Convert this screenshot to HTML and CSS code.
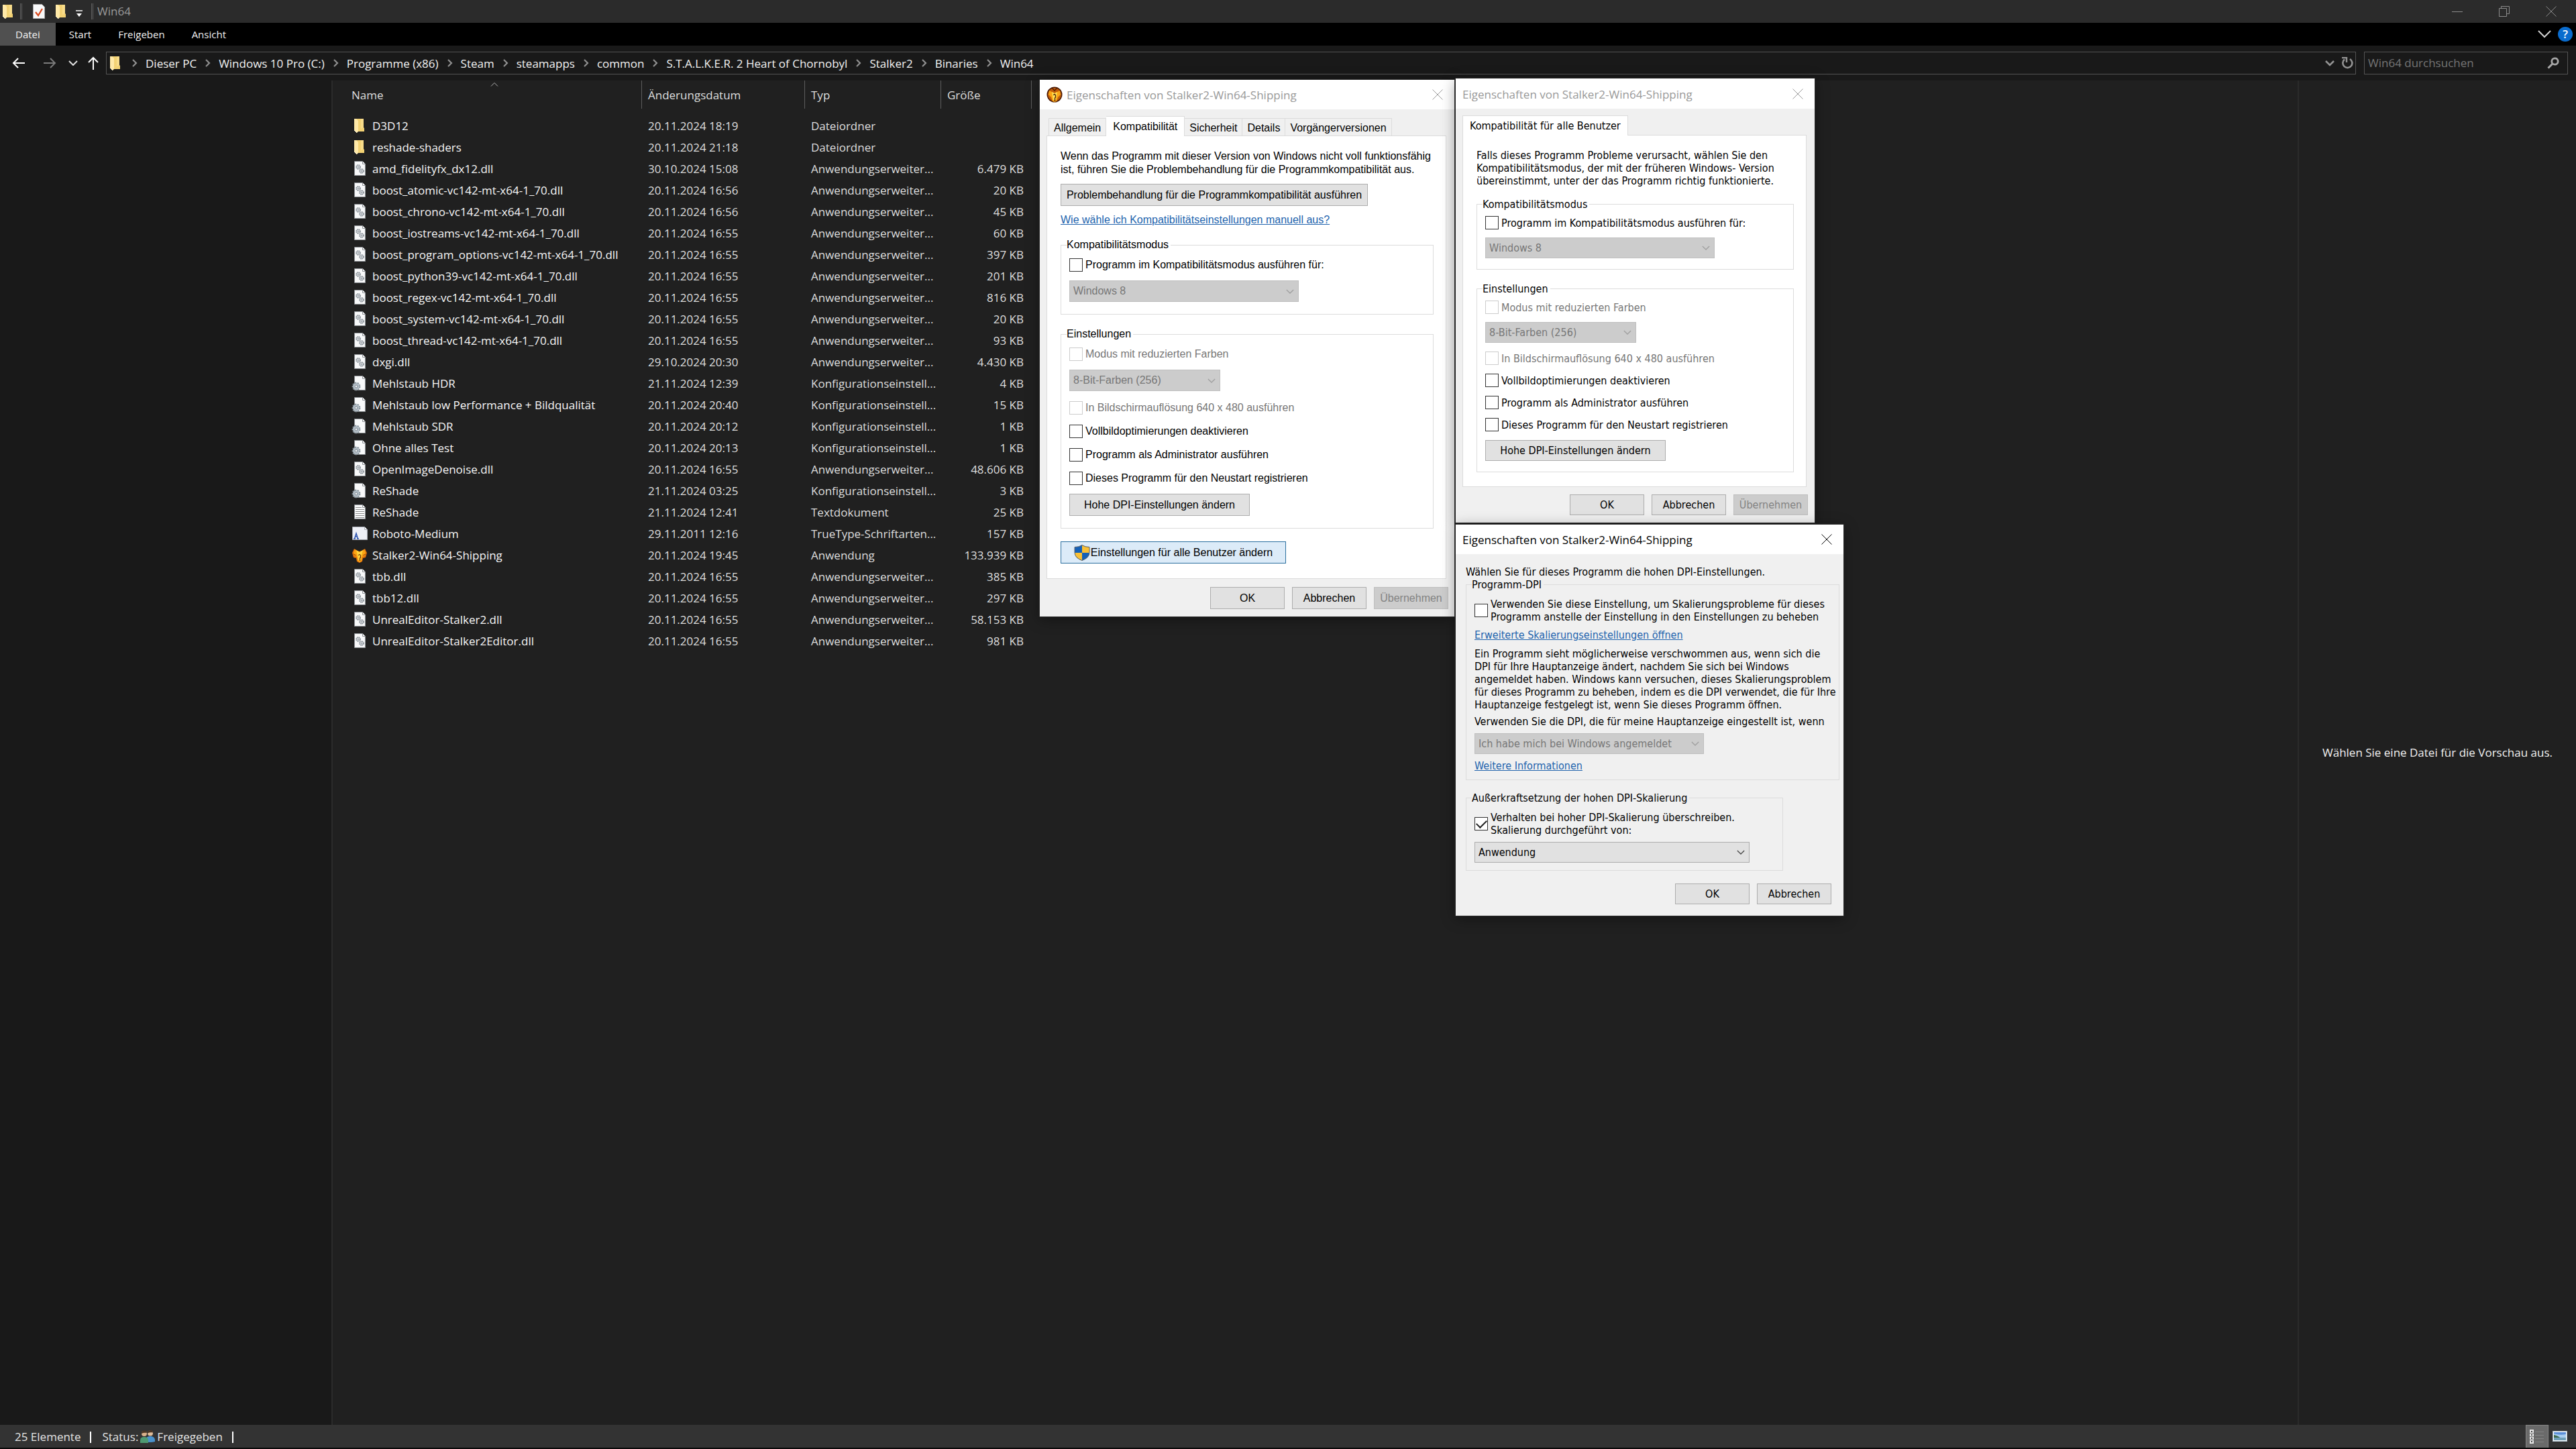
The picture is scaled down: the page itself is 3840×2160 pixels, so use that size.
FILE: index.html
```html
<!DOCTYPE html>
<html lang="de">
<head>
<meta charset="utf-8">
<title>Win64</title>
<link rel="stylesheet" href="styles.css">
</head>
<body>
<svg class="sprite" aria-hidden="true">
  <symbol id="folder" viewBox="0 0 24 24"><path d="M6 2h12v13l1 1v5H6z" fill="#f3d274"/><path d="M14 2h4v13l-4 2z" fill="#f8dc8a"/><path d="M4 2h3l3 3v16l-2 2-1-1-3-3z" fill="#ffe9a8"/><path d="M4 19l3 3 1 1" stroke="#fff6d8" fill="none"/></symbol>
  <symbol id="dll" viewBox="0 0 24 24"><path d="M4.500 1.500h12l4 4v17h-16z" fill="#f8f9fa" stroke="#8b8f93"/><path d="M16.500 1.500v4h4" fill="#fff" stroke="#8b8f93"/><circle cx="10" cy="10" r="3" fill="#dfe3e7" stroke="#7f878e" stroke-width="1.600" stroke-dasharray="1.600 .8"/><circle cx="10" cy="10" r="1" fill="#fff" stroke="#7f878e" stroke-width=".8"/><circle cx="15" cy="16" r="3" fill="#dfe3e7" stroke="#7f878e" stroke-width="1.600" stroke-dasharray="1.600 .8"/><circle cx="15" cy="16" r="1" fill="#fff" stroke="#7f878e" stroke-width=".8"/></symbol>
  <symbol id="ini" viewBox="0 0 24 24"><path d="M4.500 1.500h12l4 4v17h-16z" fill="#f8f9fa" stroke="#8b8f93"/><path d="M16.500 1.500v4h4" fill="#fff" stroke="#8b8f93"/><circle cx="7" cy="17" r="5" fill="#b9c3cc" stroke="#87939b" stroke-width="2.800" stroke-dasharray="2.200 1.300"/><circle cx="7" cy="17" r="4.600" fill="#b4bfc8"/><circle cx="7" cy="17" r="2" fill="#f4f6f8" stroke="#7c878f"/></symbol>
  <symbol id="txt" viewBox="0 0 24 24"><path d="M4.500 1.500h12l4 4v17h-16z" fill="#f8f9fa" stroke="#8b8f93"/><path d="M16.500 1.500v4h4" fill="#fff" stroke="#8b8f93"/><path d="M6 5.500h9M6 8.500h13M6 11.500h13M6 14.500h13M6 17.500h13M6 20.500h13" stroke="#8e8e8e"/></symbol>
  <symbol id="ttf" viewBox="0 0 24 24"><path d="M1.500 2.500h18l4 4v15h-22z" fill="#eef0f6" stroke="#a9adb5"/><path d="M19.500 2.500v4h4" fill="#fff" stroke="#a9adb5"/><path d="M3 20h3M8 20h3M4.500 20l2.500-8 2.500 8M5.600 17h3" stroke="#2f55b0" stroke-width="1.500" fill="none"/></symbol>
  <symbol id="game" viewBox="0 0 24 24"><path d="M1 9l3-6 5 3 3 1 3-1 5-3 3 6-2 7-4 1-1 5-4 2-4-2-1-5-4-1z" fill="#e0720c"/><path d="M3 9l2-5 7 5 7-5 2 5-2 5-3 1-1 6-3 2-3-2-1-6-3-1z" fill="#fba514"/><path d="M12 8l5-3-2 8-1 7h-4l-1-7-2-8z" fill="#ffd53e"/><path d="M10.500 13q1.500-3 3 0v3l-1 1v4" stroke="#6b2d06" stroke-width="1.200" fill="none"/><path d="M3 11l4 2M21 11l-4 2" stroke="#9a4208" fill="none"/></symbol>
  <symbol id="gameround" viewBox="0 0 24 24"><circle cx="12" cy="12" r="11.500" fill="#4a1a05"/><circle cx="12" cy="12" r="10" fill="#c05a0a"/><path d="M4 6l8 4 8-4 1 6-4 4-2 6-3 1-3-1-2-6-4-4z" fill="#fba514"/><path d="M8 8l4 2 4-2-2 12h-4z" fill="#ffe055"/><path d="M10.500 13q1.500-3 3 0v3l-1 1v5M8 2l4 4 4-4" stroke="#4a1b05" stroke-width="1.300" fill="none"/></symbol>
  <symbol id="crumb" viewBox="0 0 10 12"><path d="M2 1l5 5-5 5" fill="none" stroke="#8f8f8f" stroke-width="2.200"/></symbol>
  <symbol id="down" viewBox="0 0 14 8"><path d="M1 1l6 6 6-6" fill="none" stroke="currentColor" stroke-width="1.500"/></symbol>
  <symbol id="close" viewBox="0 0 16 16"><path d="M.5.500l15 15M15.500.500l-15 15" fill="none" stroke="currentColor"/></symbol>
</svg>

<header class="titlebar">
  <svg class="ico"><use href="#folder"/></svg>
  <span class="vbar"></span>
  <svg class="ico qa-props" viewBox="0 0 24 24"><path d="M3.500 1.500h13l4 4v17h-17z" fill="#f8f9fa" stroke="#a9a9a9"/><path d="M7 13l4 5 6-10" fill="none" stroke="#d9481c" stroke-width="2.200"/></svg>
  <svg class="ico qa-folder"><use href="#folder"/></svg>
  <svg class="ico qa-more" viewBox="0 0 24 24"><path d="M7 11h10" stroke="#fff" stroke-width="1.500"/><path d="M8 15h8l-4 5z" fill="#fff"/></svg>
  <span class="vbar"></span>
  <h1 class="window-name">Win64</h1>
  <div class="window-buttons">
    <button aria-label="Minimieren"><svg width="16" height="16"><path d="M0 8.500h16" stroke="#8c8c8c"/></svg></button>
    <button aria-label="Verkleinern"><svg width="16" height="16"><path d="M.5 3.500h11v12H.5zM3.500 3V.500h12v11H12" fill="none" stroke="#8c8c8c"/></svg></button>
    <button aria-label="Fenster schließen"><svg width="16" height="16"><use href="#close"/></svg></button>
  </div>
</header>

<nav class="ribbon">
  <button class="ribbon-tab file">Datei</button>
  <button class="ribbon-tab">Start</button>
  <button class="ribbon-tab">Freigeben</button>
  <button class="ribbon-tab">Ansicht</button>
  <div class="ribbon-end">
    <button aria-label="Menüband erweitern"><svg width="20" height="12" viewBox="0 0 20 12"><path d="M1 1l9 9 9-9" fill="none" stroke="#d0d0d0" stroke-width="2"/></svg></button>
    <button class="help" aria-label="Hilfe">?</button>
  </div>
</nav>

<div class="navbar">
  <button class="nav-btn wide" aria-label="Zurück"><svg width="20" height="16" viewBox="0 0 20 16"><path d="M19 8H2M9 1L2 8l7 7" fill="none" stroke="#fff" stroke-width="2"/></svg></button>
  <button class="nav-btn wide" aria-label="Vorwärts"><svg width="20" height="16" viewBox="0 0 20 16"><path d="M1 8h17M11 1l7 7-7 7" fill="none" stroke="#7b7b7b" stroke-width="2"/></svg></button>
  <button class="nav-btn recent" aria-label="Zuletzt besucht"><svg width="14" height="8" viewBox="0 0 14 8"><path d="M1 1l6 6 6-6" fill="none" stroke="#e0e0e0" stroke-width="2"/></svg></button>
  <button class="nav-btn up" aria-label="Nach oben"><svg width="16" height="20" viewBox="0 0 16 20"><path d="M8 20V2M1 9l7-7 7 7" fill="none" stroke="#fff" stroke-width="2"/></svg></button>
  <div class="address">
    <svg class="ico"><use href="#folder"/></svg>
    <svg class="sep"><use href="#crumb"/></svg><a href="#">Dieser PC</a>
    <svg class="sep"><use href="#crumb"/></svg><a href="#">Windows 10 Pro (C:)</a>
    <svg class="sep"><use href="#crumb"/></svg><a href="#">Programme (x86)</a>
    <svg class="sep"><use href="#crumb"/></svg><a href="#">Steam</a>
    <svg class="sep"><use href="#crumb"/></svg><a href="#">steamapps</a>
    <svg class="sep"><use href="#crumb"/></svg><a href="#">common</a>
    <svg class="sep"><use href="#crumb"/></svg><a href="#">S.T.A.L.K.E.R. 2 Heart of Chornobyl</a>
    <svg class="sep"><use href="#crumb"/></svg><a href="#">Stalker2</a>
    <svg class="sep"><use href="#crumb"/></svg><a href="#">Binaries</a>
    <svg class="sep"><use href="#crumb"/></svg><a href="#">Win64</a>
    <div class="address-end">
      <button aria-label="Frühere Orte"><svg width="14" height="9" viewBox="0 0 14 9"><path d="M1 1l6 6 6-6" fill="none" stroke="#949494" stroke-width="2.600"/></svg></button>
      <button aria-label="Aktualisieren"><svg width="18" height="18" viewBox="0 0 18 18"><path d="M5 3.500a7 7 0 1 0 8-.5" fill="none" stroke="#949494" stroke-width="2.600"/><path d="M1 1h7v7" fill="none" stroke="#949494" stroke-width="2.400"/></svg></button>
    </div>
  </div>
  <form class="search">
    <input type="text" aria-label="Win64 durchsuchen" placeholder="Win64 durchsuchen">
    <button type="button" aria-label="Suchen"><svg width="18" height="18" viewBox="0 0 18 18"><circle cx="11.500" cy="6.500" r="4.700" fill="none" stroke="#a8a8a8" stroke-width="2.800"/><path d="M8 10l-6.500 6.500" stroke="#a8a8a8" stroke-width="3"/></svg></button>
  </form>
</div>

<main class="panes">
  <aside class="tree"></aside>
  <section class="files">
    <table>
      <colgroup><col class="c-name"><col class="c-date"><col class="c-type"><col class="c-size"></colgroup>
      <thead><tr><th><svg class="sort" viewBox="0 0 12 6"><path d="M1 5.500l5-5 5 5" fill="none" stroke="#b0b0b0"/></svg>Name</th><th>Änderungsdatum</th><th>Typ</th><th>Größe</th></tr></thead>
      <tbody>
        <tr><td><svg class="ico"><use href="#folder"/></svg>D3D12</td><td>20.11.2024 18:19</td><td>Dateiordner</td><td></td></tr>
        <tr><td><svg class="ico"><use href="#folder"/></svg>reshade-shaders</td><td>20.11.2024 21:18</td><td>Dateiordner</td><td></td></tr>
        <tr><td><svg class="ico"><use href="#dll"/></svg>amd_fidelityfx_dx12.dll</td><td>30.10.2024 15:08</td><td>Anwendungserweiter...</td><td>6.479 KB</td></tr>
        <tr><td><svg class="ico"><use href="#dll"/></svg>boost_atomic-vc142-mt-x64-1_70.dll</td><td>20.11.2024 16:56</td><td>Anwendungserweiter...</td><td>20 KB</td></tr>
        <tr><td><svg class="ico"><use href="#dll"/></svg>boost_chrono-vc142-mt-x64-1_70.dll</td><td>20.11.2024 16:56</td><td>Anwendungserweiter...</td><td>45 KB</td></tr>
        <tr><td><svg class="ico"><use href="#dll"/></svg>boost_iostreams-vc142-mt-x64-1_70.dll</td><td>20.11.2024 16:55</td><td>Anwendungserweiter...</td><td>60 KB</td></tr>
        <tr><td><svg class="ico"><use href="#dll"/></svg>boost_program_options-vc142-mt-x64-1_70.dll</td><td>20.11.2024 16:55</td><td>Anwendungserweiter...</td><td>397 KB</td></tr>
        <tr><td><svg class="ico"><use href="#dll"/></svg>boost_python39-vc142-mt-x64-1_70.dll</td><td>20.11.2024 16:55</td><td>Anwendungserweiter...</td><td>201 KB</td></tr>
        <tr><td><svg class="ico"><use href="#dll"/></svg>boost_regex-vc142-mt-x64-1_70.dll</td><td>20.11.2024 16:55</td><td>Anwendungserweiter...</td><td>816 KB</td></tr>
        <tr><td><svg class="ico"><use href="#dll"/></svg>boost_system-vc142-mt-x64-1_70.dll</td><td>20.11.2024 16:55</td><td>Anwendungserweiter...</td><td>20 KB</td></tr>
        <tr><td><svg class="ico"><use href="#dll"/></svg>boost_thread-vc142-mt-x64-1_70.dll</td><td>20.11.2024 16:55</td><td>Anwendungserweiter...</td><td>93 KB</td></tr>
        <tr><td><svg class="ico"><use href="#dll"/></svg>dxgi.dll</td><td>29.10.2024 20:30</td><td>Anwendungserweiter...</td><td>4.430 KB</td></tr>
        <tr><td><svg class="ico"><use href="#ini"/></svg>Mehlstaub HDR</td><td>21.11.2024 12:39</td><td>Konfigurationseinstell...</td><td>4 KB</td></tr>
        <tr><td><svg class="ico"><use href="#ini"/></svg>Mehlstaub low Performance + Bildqualität</td><td>20.11.2024 20:40</td><td>Konfigurationseinstell...</td><td>15 KB</td></tr>
        <tr><td><svg class="ico"><use href="#ini"/></svg>Mehlstaub SDR</td><td>20.11.2024 20:12</td><td>Konfigurationseinstell...</td><td>1 KB</td></tr>
        <tr><td><svg class="ico"><use href="#ini"/></svg>Ohne alles Test</td><td>20.11.2024 20:13</td><td>Konfigurationseinstell...</td><td>1 KB</td></tr>
        <tr><td><svg class="ico"><use href="#dll"/></svg>OpenImageDenoise.dll</td><td>20.11.2024 16:55</td><td>Anwendungserweiter...</td><td>48.606 KB</td></tr>
        <tr><td><svg class="ico"><use href="#ini"/></svg>ReShade</td><td>21.11.2024 03:25</td><td>Konfigurationseinstell...</td><td>3 KB</td></tr>
        <tr><td><svg class="ico"><use href="#txt"/></svg>ReShade</td><td>21.11.2024 12:41</td><td>Textdokument</td><td>25 KB</td></tr>
        <tr><td><svg class="ico"><use href="#ttf"/></svg>Roboto-Medium</td><td>29.11.2011 12:16</td><td>TrueType-Schriftarten...</td><td>157 KB</td></tr>
        <tr><td><svg class="ico"><use href="#game"/></svg>Stalker2-Win64-Shipping</td><td>20.11.2024 19:45</td><td>Anwendung</td><td>133.939 KB</td></tr>
        <tr><td><svg class="ico"><use href="#dll"/></svg>tbb.dll</td><td>20.11.2024 16:55</td><td>Anwendungserweiter...</td><td>385 KB</td></tr>
        <tr><td><svg class="ico"><use href="#dll"/></svg>tbb12.dll</td><td>20.11.2024 16:55</td><td>Anwendungserweiter...</td><td>297 KB</td></tr>
        <tr><td><svg class="ico"><use href="#dll"/></svg>UnrealEditor-Stalker2.dll</td><td>20.11.2024 16:55</td><td>Anwendungserweiter...</td><td>58.153 KB</td></tr>
        <tr><td><svg class="ico"><use href="#dll"/></svg>UnrealEditor-Stalker2Editor.dll</td><td>20.11.2024 16:55</td><td>Anwendungserweiter...</td><td>981 KB</td></tr>
      </tbody>
    </table>
  </section>
  <aside class="preview">Wählen Sie eine Datei für die Vorschau aus.</aside>
</main>

<footer class="status">
  <span>25 Elemente</span><span class="tick"></span>
  <span class="share">Status:
    <svg width="24" height="20" viewBox="0 0 24 20"><circle cx="7" cy="5" r="4" fill="#d8b08a"/><path d="M3 5a4 4 0 0 1 8-1q-4-1-8 1z" fill="#4a3524"/><circle cx="16" cy="4.500" r="4" fill="#e0bd9a"/><path d="M12 4.500a4 4 0 0 1 8-1q-4-1-8 1z" fill="#4a3524"/><path d="M9 17v-3q1-5 7-5t7 5v3q-7 2-14 0z" fill="#4a92cc"/><path d="M1 19v-4q0-5 6-5t6 5v4z" fill="#4f9a72"/></svg>
    Freigegeben</span><span class="tick"></span>
  <div class="views">
    <button class="on" aria-label="Details"><svg width="24" height="22" viewBox="0 0 24 22"><path d="M1 0h6v21H1z" fill="#e8e8e8"/><path d="M3 2h2v2H3zM3 7h2v2H3zM3 12h2v2H3zM3 17h2v2H3z" fill="#444"/><path d="M1 5.500h6M1 10.500h6M1 15.500h6" stroke="#777"/><path d="M9 3.500h13M9 8.500h13M9 13.500h13M9 18.500h13" stroke="#848484"/></svg></button>
    <button aria-label="Große Symbole"><svg width="22" height="16" viewBox="0 0 22 16"><path d="M0 0h22v16H0z" fill="#aebcc8"/><path d="M1 1h20v14H1z" fill="#fff"/><path d="M2 2h18v12H2z" fill="#a8cdf0"/><path d="M2 2h18v3q-9 2-18-1z" fill="#5b8fd8"/><path d="M2 6q6 2 10 4h8v4H2z" fill="#6f9fb8"/><path d="M2 6q5 1 9 4H2z" fill="#3f6b4c"/></svg></button>
  </div>
</footer>

<section class="dialog d-compat" role="dialog" aria-label="Kompatibilität">
  <header class="cap inactive"><svg class="ico"><use href="#gameround"/></svg><h2>Eigenschaften von Stalker2-Win64-Shipping</h2><button aria-label="Schließen"><svg width="16" height="16"><use href="#close"/></svg></button></header>
  <div class="tabs"><button>Allgemein</button><button class="sel">Kompatibilität</button><button>Sicherheit</button><button>Details</button><button>Vorgängerversionen</button></div>
  <div class="sheet">
    <p>Wenn das Programm mit dieser Version von Windows nicht voll funktionsfähig<br>ist, führen Sie die Problembehandlung für die Programmkompatibilität aus.</p>
    <button class="btn trouble">Problembehandlung für die Programmkompatibilität ausführen</button>
    <a class="link" href="#">Wie wähle ich Kompatibilitätseinstellungen manuell aus?</a>
    <fieldset><legend>Kompatibilitätsmodus</legend>
      <label class="check"><input type="checkbox">Programm im Kompatibilitätsmodus ausführen für:</label>
      <div class="pick mid"><select disabled aria-label="Windows-Version"><option>Windows 8</option></select><svg><use href="#down"/></svg></div>
    </fieldset>
    <fieldset><legend>Einstellungen</legend>
      <label class="check off"><input type="checkbox" disabled>Modus mit reduzierten Farben</label>
      <div class="pick short"><select disabled aria-label="Farbmodus"><option>8-Bit-Farben (256)</option></select><svg><use href="#down"/></svg></div>
      <label class="check off"><input type="checkbox" disabled>In Bildschirmauflösung 640 x 480 ausführen</label>
      <label class="check"><input type="checkbox">Vollbildoptimierungen deaktivieren</label>
      <label class="check"><input type="checkbox">Programm als Administrator ausführen</label>
      <label class="check"><input type="checkbox">Dieses Programm für den Neustart registrieren</label>
      <button class="btn dpi">Hohe DPI-Einstellungen ändern</button>
    </fieldset>
    <button class="btn all-users"><svg width="24" height="24" viewBox="0 0 24 24"><path d="M12 .500q4 3 11 3v8q0 8-11 12-11-4-11-12v-8q7 0 11-3z" fill="#1461b8"/><path d="M12 .500q4 3 11 3V12H12zM12 12v11.500Q1 19.500 1 12z" fill="#f9c035"/><path d="M12 .500q4 3 11 3v8q0 8-11 12-11-4-11-12v-8q7 0 11-3z" fill="none" stroke="#5a5f66"/></svg>Einstellungen für alle Benutzer ändern</button>
  </div>
  <div class="actions"><button class="btn">OK</button><button class="btn">Abbrechen</button><button class="btn" disabled>Übernehmen</button></div>
</section>

<section class="dialog d-all" role="dialog" aria-label="Kompatibilität für alle Benutzer">
  <header class="cap inactive"><h2>Eigenschaften von Stalker2-Win64-Shipping</h2><button aria-label="Schließen"><svg width="16" height="16"><use href="#close"/></svg></button></header>
  <div class="tabs"><button class="sel">Kompatibilität für alle Benutzer</button></div>
  <div class="sheet">
    <p>Falls dieses Programm Probleme verursacht, wählen Sie den<br>Kompatibilitätsmodus, der mit der früheren Windows- Version<br>übereinstimmt, unter der das Programm richtig funktionierte.</p>
    <fieldset><legend>Kompatibilitätsmodus</legend>
      <label class="check"><input type="checkbox">Programm im Kompatibilitätsmodus ausführen für:</label>
      <div class="pick mid"><select disabled aria-label="Windows-Version"><option>Windows 8</option></select><svg><use href="#down"/></svg></div>
    </fieldset>
    <fieldset><legend>Einstellungen</legend>
      <label class="check off"><input type="checkbox" disabled>Modus mit reduzierten Farben</label>
      <div class="pick short"><select disabled aria-label="Farbmodus"><option>8-Bit-Farben (256)</option></select><svg><use href="#down"/></svg></div>
      <label class="check off"><input type="checkbox" disabled>In Bildschirmauflösung 640 x 480 ausführen</label>
      <label class="check"><input type="checkbox">Vollbildoptimierungen deaktivieren</label>
      <label class="check"><input type="checkbox">Programm als Administrator ausführen</label>
      <label class="check"><input type="checkbox">Dieses Programm für den Neustart registrieren</label>
      <button class="btn dpi">Hohe DPI-Einstellungen ändern</button>
    </fieldset>
  </div>
  <div class="actions"><button class="btn">OK</button><button class="btn">Abbrechen</button><button class="btn" disabled>Übernehmen</button></div>
</section>

<section class="dialog d-dpi" role="dialog" aria-label="Hohe DPI-Einstellungen">
  <header class="cap"><h2>Eigenschaften von Stalker2-Win64-Shipping</h2><button aria-label="Schließen"><svg width="16" height="16"><use href="#close"/></svg></button></header>
  <div class="plain">
    <p>Wählen Sie für dieses Programm die hohen DPI-Einstellungen.</p>
    <fieldset class="prog"><legend>Programm-DPI</legend>
      <label class="check"><input type="checkbox"><span>Verwenden Sie diese Einstellung, um Skalierungsprobleme für dieses<br>Programm anstelle der Einstellung in den Einstellungen zu beheben</span></label>
      <a class="link" href="#">Erweiterte Skalierungseinstellungen öffnen</a>
      <p>Ein Programm sieht möglicherweise verschwommen aus, wenn sich die<br>DPI für Ihre Hauptanzeige ändert, nachdem Sie sich bei Windows<br>angemeldet haben. Windows kann versuchen, dieses Skalierungsproblem<br>für dieses Programm zu beheben, indem es die DPI verwendet, die für Ihre<br>Hauptanzeige festgelegt ist, wenn Sie dieses Programm öffnen.</p>
      <label class="when" for="dpi-when">Verwenden Sie die DPI, die für meine Hauptanzeige eingestellt ist, wenn</label>
      <div class="pick mid"><select id="dpi-when" disabled><option>Ich habe mich bei Windows angemeldet</option></select><svg><use href="#down"/></svg></div>
      <a class="link" href="#">Weitere Informationen</a>
    </fieldset>
    <fieldset class="override"><legend>Außerkraftsetzung der hohen DPI-Skalierung</legend>
      <label class="check"><input type="checkbox" checked><span>Verhalten bei hoher DPI-Skalierung überschreiben.<br>Skalierung durchgeführt von:</span></label>
      <div class="pick long"><select aria-label="Skalierung durchgeführt von"><option>Anwendung</option></select><svg><use href="#down"/></svg></div>
    </fieldset>
  </div>
  <div class="actions"><button class="btn">OK</button><button class="btn">Abbrechen</button></div>
</section>
</body>
</html>
```
FILE: styles.css
```css
* { box-sizing: border-box; }
body {
  margin: 0;
  min-height: 100vh;
  display: flex;
  flex-direction: column;
  background: #202020;
  color: #f2f2f2;
  font: 17px/24px "Open Sans", "Noto Sans", sans-serif;
  border-bottom: 2px solid #0a0a0a;
  white-space: nowrap;
}
button, input, select { font: inherit; color: inherit; margin: 0; }
button { background: none; border: 0; padding: 0; }
svg { display: block; flex: none; }
h1, h2, p { margin: 0; font-weight: 400; font-size: inherit; }
.sprite { display: none; }
.ico { width: 24px; height: 24px; }

/* Title bar */
.titlebar { display: flex; align-items: center; height: 34px; background: #2b2b2b; }
.vbar { width: 3px; height: 24px; margin-left: 6px; border: solid #606060; border-width: 0 1px; }
.qa-props { margin-left: 13px; }
.qa-folder { margin-left: 9px; }
.qa-more { margin-left: 3px; }
.window-name { margin-left: 6px; color: #9a9a9a; }
.window-buttons { display: flex; margin-left: auto; padding-right: 2px; color: #8c8c8c; }
.window-buttons button { display: grid; place-items: center; width: 70px; height: 34px; }

/* Ribbon */
.ribbon { display: flex; height: 34px; background: #000; font-size: 15px; }
.ribbon-tab { padding: 0 20px; }
.ribbon-tab.file { padding: 0 23px; background: #505050; }
.ribbon-end { display: flex; align-items: center; gap: 10px; margin-left: auto; padding-right: 5px; }
.help { width: 22px; height: 22px; border-radius: 50%; background: #0a6cce; color: #fff; font-size: 17px; line-height: 22px; font-weight: 600; }

/* Navigation bar */
.navbar { display: flex; align-items: center; height: 52px; padding: 0 12px 0 5px; background: #191919; }
.nav-btn { display: grid; place-items: center; height: 34px; }
.nav-btn.wide { width: 46px; }
.nav-btn.recent { width: 24px; }
.nav-btn.up { width: 36px; }
.address { display: flex; flex: 1; align-items: center; height: 34px; margin: 0 12px 0 1px; border: 1px solid #535353; }
.address a { padding-top: 2px; color: #f2f2f2; text-decoration: none; }
.sep { width: 10px; height: 12px; margin: 0 11px 0 12px; }
.address .ico { margin-left: 1px; }
.address-end { display: flex; align-items: center; gap: 10px; margin-left: auto; padding-right: 3px; }
.search { display: flex; align-items: center; width: 304px; height: 34px; padding: 0 12px 0 5px; border: 1px solid #535353; }
.search input { flex: 1; min-width: 0; padding: 0; border: 0; outline: 0; background: none; }
.search input::placeholder { color: #757575; opacity: 1; }

/* Panes */
.panes { display: grid; grid-template-columns: 496px 1fr 415px; flex: 1; }
.tree { background: #191919; border-right: 2px solid #2b2b2b; }
.preview { display: grid; place-items: center; border-left: 2px solid #2b2b2b; }
.files table { width: 1042px; table-layout: fixed; border-collapse: separate; border-spacing: 0; }
.c-name { width: 461px; }
.c-date { width: 243px; }
.c-type { width: 203px; }
.c-size { width: 135px; }
.files th { height: 42px; padding: 2px 9px 0; border-right: 1px solid #5c5c5c; text-align: left; font-weight: 400; color: #dedede; }
.files th:first-child { position: relative; padding-left: 28px; }
.sort { position: absolute; top: 3px; left: 51%; width: 12px; height: 6px; }
.files thead::after { content: ""; display: block; height: 9px; }
.files td { height: 32px; padding: 2px 12px 0 9px; color: #dedede; }
.files td:first-child { display: flex; align-items: center; gap: 7px; padding-left: 28px; color: #f6f6f6; }
.files td .ico { margin-top: -2px; }
.files td:last-child { text-align: right; }

/* Status bar */
.status { display: flex; align-items: center; height: 34px; padding: 2px 0 0 22px; background: #333; color: #e4e4e4; }
.share { display: flex; align-items: center; gap: 2px; }
.tick { width: 2px; height: 17px; margin: 0 16px 0 14px; background: #fff; }
.views { display: flex; margin: -2px 0 0 auto; padding-right: 7px; }
.views button { display: grid; place-items: center; width: 34px; height: 34px; }
.views .on { background: #6a6a6a; border: 1px solid #868686; border-bottom: 0; }

/* Property dialogs */
.dialog { position: absolute; background: #f0f0f0; color: #000; box-shadow: 0 0 0 1px #2c2c2c, 0 4px 20px rgba(0, 0, 0, .4); }
.d-compat { left: 1550px; top: 119px; width: 618px; font: 16px/20px "Liberation Sans", sans-serif; }
.d-all { left: 2170px; top: 117px; width: 535px; font: 16px/19px "DejaVu Sans Condensed", "DejaVu Sans", sans-serif; }
.d-dpi { left: 2170px; top: 782px; width: 578px; font: 16px/19px "DejaVu Sans Condensed", "DejaVu Sans", sans-serif; }
.cap { display: flex; align-items: center; height: 44px; padding: 2px 17px 0 10px; background: #fff; font: 17px/24px "Open Sans", "Noto Sans", sans-serif; }
.cap .ico { margin: -2px 6px 0 0; }
.cap button { margin: -2px 0 0 auto; }
.inactive { color: #999; }
.tabs { display: flex; align-items: flex-end; height: 39px; padding-left: 13px; }
.tabs button { height: 26px; padding: 2px 7px 0; border: 1px solid #dcdcdc; border-width: 1px 1px 0 0; }
.tabs button:first-child { border-left-width: 1px; }
.tabs .sel { height: 30px; margin: 0 0 -1px; padding: 0 10px; background: #fff; }
.sheet { margin: 0 12px 0 10px; padding: 20px 18px 22px 20px; border: 1px solid #dcdcdc; background: #fff; }
.btn { display: flex; align-items: center; justify-content: center; height: 33px; border: 1px solid #adadad; background: #e1e1e1; color: #000; }
.btn:disabled { border-color: #bfbfbf; background: #ccc; color: #838383; }
.trouble { width: 458px; margin: 11px 0; }
.all-users { width: 336px; margin-top: 19px; gap: 1px; border-color: #2a6f9f; background: #dcebf8; }
.link { display: block; width: max-content; color: #2163ad; text-decoration: underline; }
fieldset { margin: 17px 0 0; padding: 0 12px 18px; border: 1px solid #dcdcdc; min-width: 0; }
fieldset + fieldset { margin-top: 19px; }
legend { margin: 0 0 -5px -4px; padding: 0 3px 0 0; }
.check { display: flex; align-items: center; gap: 4px; min-height: 20px; margin-top: 15px; }
.check.off { color: #777; }
.check input { appearance: none; display: grid; place-items: center; flex: none; width: 20px; height: 20px; border: 1px solid #333; background: #fff; }
.check input:disabled { border-color: #ccc; }
.check input:checked::after { content: ""; width: 13px; height: 7px; margin-top: -4px; border: solid #222; border-width: 0 0 2px 2px; rotate: -45deg; }
.pick { display: grid; align-items: center; height: 32px; margin-top: 13px; }
.pick select { grid-area: 1 / 1; width: 100%; height: 100%; padding: 0 5px; appearance: none; border: 1px solid #adadad; border-radius: 0; background: #e1e1e1; opacity: 1; }
.pick select:disabled { border-color: #bfbfbf; background: #ccc; color: #777; }
.pick svg { grid-area: 1 / 1; justify-self: end; width: 12px; height: 7px; margin-right: 7px; color: #444; pointer-events: none; }
.pick select:disabled + svg { color: #a0a0a0; }
.mid { width: 342px; }
.short { width: 225px; }
.long { width: 410px; }
.dpi { width: 269px; margin-top: 13px; }
.actions { display: flex; justify-content: flex-end; gap: 11px; padding: 12px 9px 11px; }
.actions .btn { width: 111px; }

/* Tighter metrics of the all-users and DPI dialogs */
.d-all .btn, .d-dpi .btn, .d-all .pick, .d-dpi .pick { height: 31px; }
.d-all .cap { height: 45px; }
.d-all .tabs { padding-left: 10px; }
.d-all .sheet { padding-bottom: 21px; }
.d-all fieldset { margin-top: 16px; padding-bottom: 16px; }
.d-all fieldset + fieldset { margin-top: 19px; }
.d-all .check { margin-top: 13px; }
.d-all .pick { margin-top: 12px; }
.d-all .actions { padding: 11px 10px; }
.plain { padding: 17px 6px 0 15px; }
.d-dpi fieldset { margin-top: 0; padding-bottom: 11px; }
.d-dpi .override { width: 473px; margin-top: 17px; }
.d-dpi .check { margin-top: 15px; }
.d-dpi .link, .d-dpi .pick { margin-top: 8px; }
.d-dpi fieldset p { margin-top: 9px; }
.when { display: block; margin-top: 6px; }
.d-dpi .actions { padding: 19px 18px 17px; }
```
